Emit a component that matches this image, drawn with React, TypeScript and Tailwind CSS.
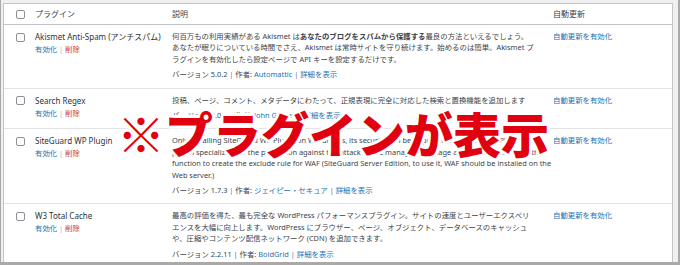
import React from "react";

function Checkbox() {
  return <span className="block w-[9px] h-[9px] border border-[#8c8f94] rounded-[2px] bg-white" />;
}

function VSep() {
  return <span className="text-[#7a5f9e]"> | </span>;
}

type RowData = {
  name: string;
  lines: React.ReactNode[];
  version: string;
  author: string;
};

const rows: RowData[] = [
  {
    name: "Akismet Anti-Spam (アンチスパム)",
    lines: [
      <>
        何百万もの利用実績がある Akismet は<strong className="font-bold">あなたのブログをスパムから保護する</strong>最良の方法といえるでしょう。
      </>,
      <>あなたが眠りについている時間でさえ、Akismet は常時サイトを守り続けます。始めるのは簡単。Akismet プ</>,
      <>ラグインを有効化したら設定ページで API キーを設定するだけです。</>,
    ],
    version: "5.0.2",
    author: "Automattic",
  },
  {
    name: "Search Regex",
    lines: [<>投稿、ページ、コメント、メタデータにわたって、正規表現に完全に対応した検索と置換機能を追加します</>],
    version: "3.0.4",
    author: "John Godley",
  },
  {
    name: "SiteGuard WP Plugin",
    lines: [
      <>Only installing SiteGuard WP Plugin on WordPress, its security can be improved. SiteGuard WP Plugin is the</>,
      <>plugin specialized for the protection against the attack to the management page and login. It also have the</>,
      <>function to create the exclude rule for WAF (SiteGuard Server Edition, to use it, WAF should be installed on the</>,
      <>Web server.)</>,
    ],
    version: "1.7.3",
    author: "ジェイピー・セキュア",
  },
  {
    name: "W3 Total Cache",
    lines: [
      <>最高の評価を得た、最も完全な WordPress パフォーマンスプラグイン。サイトの速度とユーザーエクスペリ</>,
      <>エンスを大幅に向上します。WordPress にブラウザー、ページ、オブジェクト、データベースのキャッシュ</>,
      <>や、圧縮やコンテンツ配信ネットワーク (CDN) を追加できます。</>,
    ],
    version: "2.2.11",
    author: "BoldGrid",
  },
];

function PluginRow({ row }: { row: RowData }) {
  return (
    <div className="grid grid-cols-[26px_137px_381px_1fr] border-b border-[#e4e4e6] pb-[7px]">
      <div className="pl-[12px] pt-[7.5px]">
        <Checkbox />
      </div>
      <div className="pl-[5px] pt-[6px]">
        <div className="text-[8px] leading-[11.4px] text-[#2c3338] whitespace-nowrap">{row.name}</div>
        <div className="mt-[1.6px] text-[7.4px] leading-[11.4px] whitespace-nowrap">
          <span className="text-[#2271b1]">有効化</span>
          <span className="text-[#a7aaad]"> | </span>
          <span className="text-[#c9383a]">削除</span>
        </div>
      </div>
      <div className="pl-[5px] pt-[6px] text-[7.4px] leading-[11.4px] text-[#3c434a]">
        {row.lines.map((l, i) => (
          <div key={i} className="whitespace-nowrap">
            {l}
          </div>
        ))}
        <div className="mt-[4px] whitespace-nowrap">
          バージョン {row.version}
          <VSep />
          作者: <span className="text-[#2271b1]">{row.author}</span>
          <VSep />
          <span className="text-[#2271b1]">詳細を表示</span>
        </div>
      </div>
      <div className="pl-[5px] pt-[6px] text-[7.4px] leading-[11.4px] text-[#2271b1] whitespace-nowrap">
        自動更新を有効化
      </div>
    </div>
  );
}

export default function App() {
  return (
    <div className="relative w-[680px] h-[265px] overflow-hidden bg-[#f0f0f1] border-l border-r-2 border-b-[3px] border-[#a9a9a9] pl-[2px] pt-[3px] pr-[5px] [font-family:'Noto_Sans','Noto_Sans_CJK_JP',sans-serif]">
      <div className="bg-white border-t border-l border-r border-[#c3c4c7]">
        <div className="grid grid-cols-[26px_137px_381px_1fr] h-[21px] items-center border-b border-[#c3c4c7] text-[8px] text-[#3c434a]">
          <div className="pl-[12px]">
            <Checkbox />
          </div>
          <div className="pl-[5px]">プラグイン</div>
          <div className="pl-[5px]">説明</div>
          <div className="pl-[5px]">自動更新</div>
        </div>
        {rows.map((r, i) => (
          <PluginRow key={i} row={r} />
        ))}
      </div>
      <div className="absolute left-[116px] top-[108px] text-[48px] leading-[48px] font-black text-[#e1000f] whitespace-nowrap [font-family:'Noto_Sans_CJK_JP',sans-serif] [text-shadow:3px_0_0_#fff,-3px_0_0_#fff,0_3px_0_#fff,0_-3px_0_#fff,2px_2px_0_#fff,-2px_2px_0_#fff,2px_-2px_0_#fff,-2px_-2px_0_#fff,0_0_3px_#fff]">
        ※プラグインが表示
      </div>
    </div>
  );
}
